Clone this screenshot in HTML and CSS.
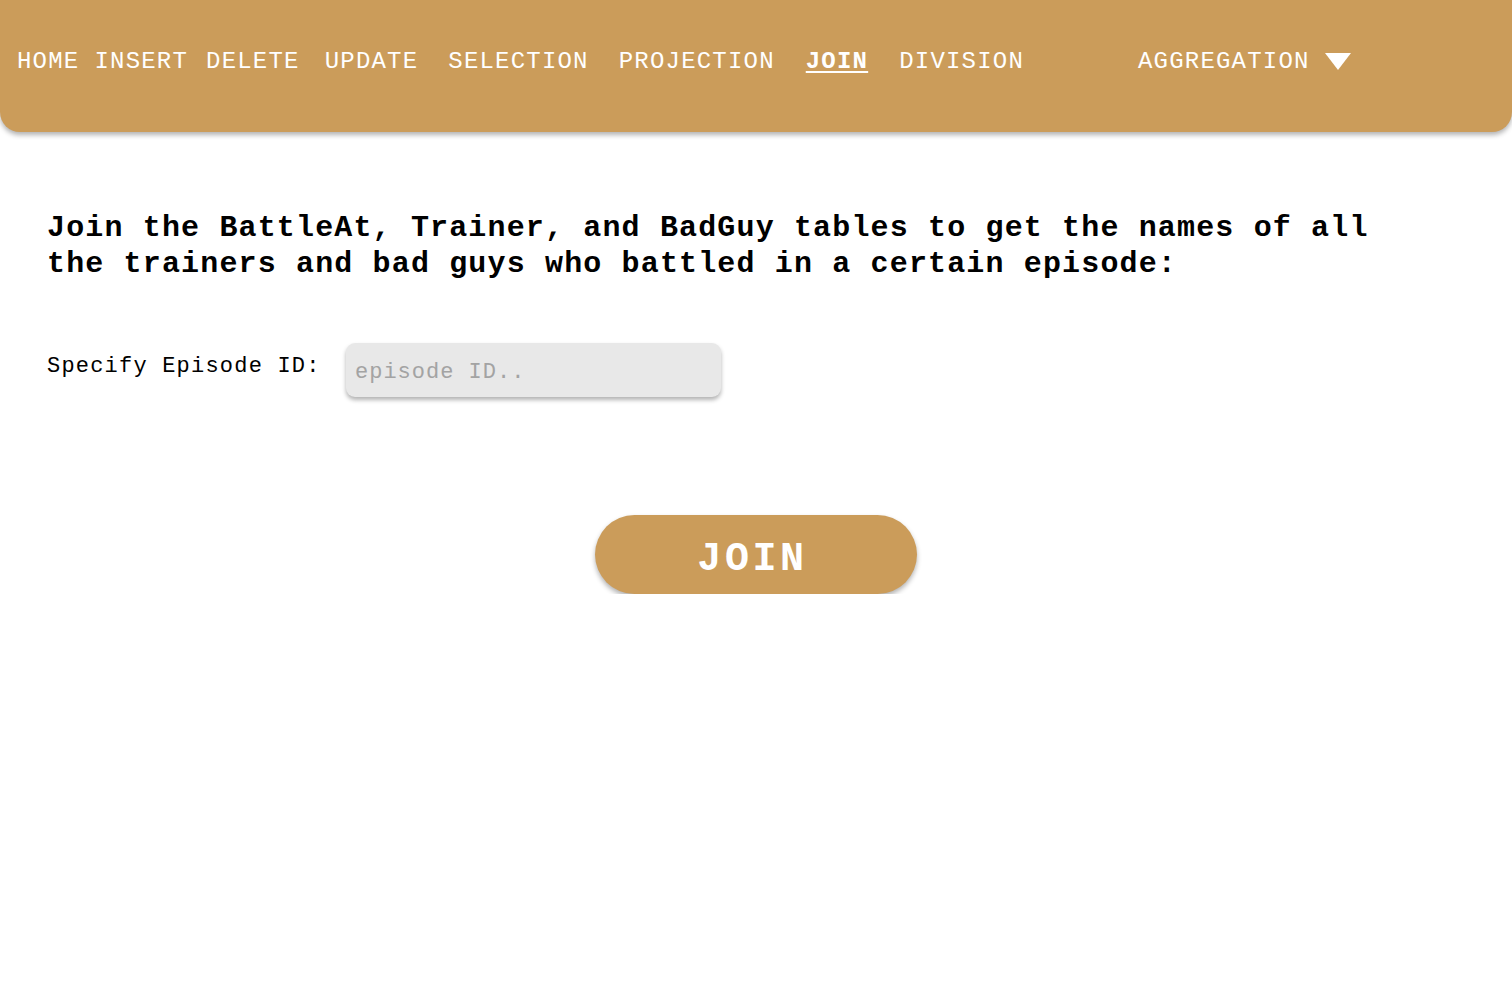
FILE: index.html
```html
<!DOCTYPE html>
<html>
<head>
<meta charset="utf-8">
<link rel="stylesheet" href="styles.css">
</head>
<body>
<nav class="topnav">
  <a class="nav-link nav-home" href="#">HOME</a>
  <a class="nav-link nav-insert" href="#">INSERT</a>
  <a class="nav-link nav-delete" href="#">DELETE</a>
  <a class="nav-link nav-update" href="#">UPDATE</a>
  <a class="nav-link nav-selection" href="#">SELECTION</a>
  <a class="nav-link nav-projection" href="#">PROJECTION</a>
  <a class="nav-link nav-join active" href="#">JOIN</a>
  <a class="nav-link nav-division" href="#">DIVISION</a>
  <div class="dropdown">
    <span class="nav-link">AGGREGATION</span>
    <svg class="caret" width="26" height="18" viewBox="0 0 26 18"><polygon points="0,0 26,0 13,17" fill="#fff"/></svg>
  </div>
</nav>
<main class="content">
  <h2 class="title">Join the BattleAt, Trainer, and BadGuy tables to get the names of all the trainers and bad guys who battled in a certain episode:</h2>
  <form class="form">
    <div class="field">
      <label class="label">Specify Episode ID:</label>
      <input class="input" type="text" placeholder="episode ID..">
    </div>
    <div class="actions">
      <button class="btn" type="button">JOIN</button>
    </div>
  </form>
</main>
</body>
</html>
```
FILE: styles.css
```css
html, body {
  margin: 0;
  padding: 0;
  background: #fff;
  font-family: "Courier New", "Nimbus Mono PS", "FreeMono", "Liberation Mono", monospace;
}
.topnav {
  display: flex;
  align-items: center;
  height: 132px;
  padding-left: 17px;
  background: #cb9c5a;
  border-radius: 0 0 20px 20px;
  box-shadow: 0 3px 5px rgba(0,0,0,0.3);
  box-sizing: border-box;
  padding-bottom: 8px;
}
.nav-link {
  color: #fff;
  text-decoration: none;
  font-size: 24px;
  letter-spacing: 1.2px;
  line-height: 30px;
}
.nav-insert { margin-left: 15px; }
.nav-delete { margin-left: 18px; }
.nav-update { margin-left: 25px; }
.nav-selection { margin-left: 30px; }
.nav-projection { margin-left: 30px; }
.nav-join { margin-left: 31px; }
.nav-division { margin-left: 31px; }
.active {
  font-weight: bold;
  text-decoration: underline;
  text-underline-offset: 3px;
}
.dropdown {
  display: flex;
  align-items: center;
  margin-left: 114px;
}
.caret {
  margin-left: 15px;
  margin-top: 0;
}
.content {
  padding: 78px 47px 0;
}
.title {
  margin: 0;
  font-size: 30px;
  font-weight: bold;
  letter-spacing: 1.15px;
  line-height: 36px;
  max-width: 1360px;
}
.form {
  margin-top: 61px;
}
.field {
  display: flex;
  align-items: flex-start;
}
.label {
  font-size: 22px;
  letter-spacing: 1.2px;
  line-height: 30px;
  padding-top: 9px;
  width: 299px;
  color: #000;
}
.input {
  width: 375px;
  height: 54px;
  box-sizing: border-box;
  border: none;
  border-radius: 9px;
  background: #e8e8e8;
  box-shadow: 0 3px 4px rgba(0,0,0,0.3);
  padding: 4px 9px 0;
  font-family: "Courier New", "Nimbus Mono PS", "FreeMono", "Liberation Mono", monospace;
  font-size: 22px;
  letter-spacing: 1px;
  outline: none;
}
.input::placeholder {
  color: #a3a3a3;
}
.actions {
  display: flex;
  justify-content: center;
  margin-top: 118px;
}
.btn {
  width: 322px;
  height: 79px;
  border: none;
  border-radius: 40px;
  background: #cb9c5a;
  color: #fff;
  font-family: "Courier New", "Nimbus Mono PS", "FreeMono", "Liberation Mono", monospace;
  font-size: 40px;
  font-weight: bold;
  letter-spacing: 3.6px;
  box-shadow: 0 3px 5px rgba(0,0,0,0.3);
  padding: 9px 0 0 0;
  text-indent: -7px;
}
```
